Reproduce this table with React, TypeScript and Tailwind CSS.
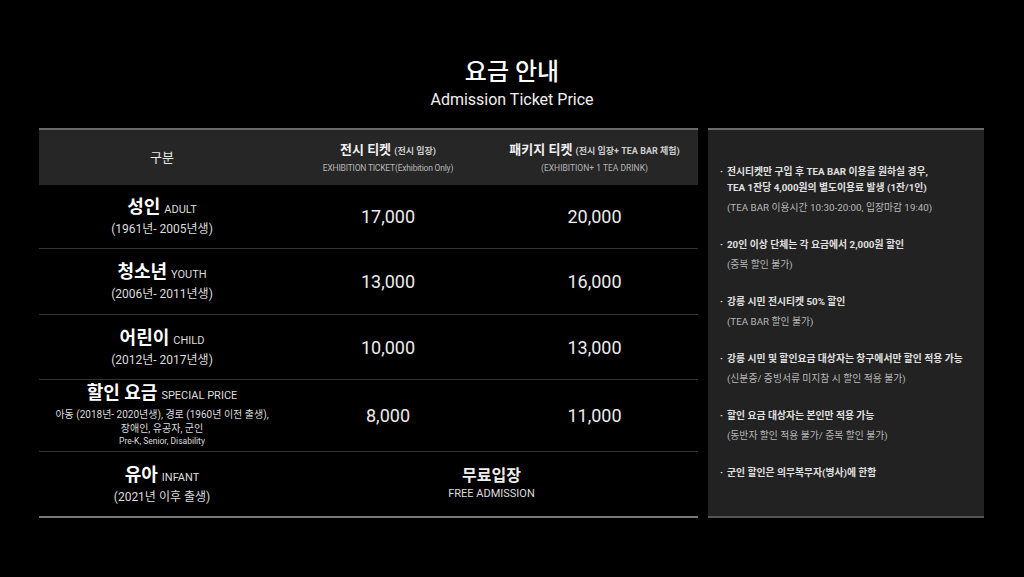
const rows = [
  { ko: "성인", en: "ADULT", sub: ["(1961년- 2005년생)"], a: "17,000", b: "20,000", h: "h-[64px]" },
  { ko: "청소년", en: "YOUTH", sub: ["(2006년- 2011년생)"], a: "13,000", b: "16,000", h: "h-[66px]" },
  { ko: "어린이", en: "CHILD", sub: ["(2012년- 2017년생)"], a: "10,000", b: "13,000", h: "h-[65px]" },
];

const notes = [
  {
    main: ["전시티켓만 구입 후 TEA BAR 이용을 원하실 경우,", "TEA 1잔당 4,000원의 별도이용료 발생 (1잔/1인)"],
    sub: "(TEA BAR 이용시간 10:30-20:00, 입장마감 19:40)",
  },
  { main: ["20인 이상 단체는 각 요금에서 2,000원 할인"], sub: "(중복 할인 불가)" },
  { main: ["강릉 시민 전시티켓 50% 할인"], sub: "(TEA BAR 할인 불가)" },
  { main: ["강릉 시민 및 할인요금 대상자는 창구에서만 할인 적용 가능"], sub: "(신분증/ 증빙서류 미지참 시 할인 적용 불가)" },
  { main: ["할인 요금 대상자는 본인만 적용 가능"], sub: "(동반자 할인 적용 불가/ 중복 할인 불가)" },
  { main: ["군인 할인은 의무복무자(병사)에 한함"] },
];

function Price({ v }: { v: string }) {
  return <div className="flex items-center justify-center text-[18px] text-[#ececec]">{v}</div>;
}

export default function App() {
  return (
    <div className="w-[1024px] h-[577px] bg-black text-white font-[Roboto,'Noto_Sans_CJK_KR',sans-serif] overflow-hidden">
      {/* 타이틀 */}
      <div className="flex flex-col items-center pt-[56px]">
        <h1 className="text-[24px] leading-[32px] font-medium">요금 안내</h1>
        <p className="text-[16px] leading-[20px] mt-[2px] text-[#f0f0f0]">Admission Ticket Price</p>
      </div>

      <div className="flex gap-[10px] pl-[39px] mt-[18px]">
        {/* 요금표 */}
        <div className="w-[659px] border-b-2 border-[#777]">
          <div className="grid grid-cols-[246px_206px_1fr] h-[57px] bg-[#262626] border-t-2 border-[#6a6a6a]">
            <div className="flex items-center justify-center text-[13px] text-[#e8e8e8]">구분</div>
            <div className="flex flex-col items-center justify-center">
              <div className="text-[13px] font-bold text-[#f0f0f0]">
                전시 티켓 <span className="text-[9px] font-bold text-[#ccc]">(전시 입장)</span>
              </div>
              <div className="text-[8.5px] text-[#b5b5b5] mt-[3px] tracking-[-0.2px]">EXHIBITION TICKET(Exhibition Only)</div>
            </div>
            <div className="flex flex-col items-center justify-center">
              <div className="text-[13px] font-bold text-[#f0f0f0]">
                패키지 티켓 <span className="text-[9px] font-bold text-[#ccc]">(전시 입장+ TEA BAR 체험)</span>
              </div>
              <div className="text-[8.5px] text-[#b5b5b5] mt-[3px]">(EXHIBITION+ 1 TEA DRINK)</div>
            </div>
          </div>

          {rows.map((r) => (
            <div key={r.ko} className={`grid grid-cols-[246px_206px_1fr] border-b border-[#333] ${r.h}`}>
              <div className="flex flex-col items-center justify-center">
                <div className="leading-[22px]">
                  <span className="text-[18px] font-bold">{r.ko}</span>{" "}
                  <span className="text-[11px] text-[#ddd]">{r.en}</span>
                </div>
                <div className="text-[12px] leading-[16px] text-[#ddd]">{r.sub[0]}</div>
              </div>
              <Price v={r.a} />
              <Price v={r.b} />
            </div>
          ))}

          <div className="grid grid-cols-[246px_206px_1fr] h-[72px] border-b border-[#333]">
            <div className="flex flex-col items-center justify-center">
              <div className="leading-[20px]">
                <span className="text-[18px] font-bold">할인 요금</span>{" "}
                <span className="text-[11px] text-[#ddd]">SPECIAL PRICE</span>
              </div>
              <div className="text-[10px] leading-[14px] text-[#ddd] mt-[2px]">아동 (2018년- 2020년생), 경로 (1960년 이전 출생),</div>
              <div className="text-[10px] leading-[13px] text-[#ddd]">장애인, 유공자, 군인</div>
              <div className="text-[8.5px] leading-[13px] text-[#ddd]">Pre-K, Senior, Disability</div>
            </div>
            <Price v="8,000" />
            <Price v="11,000" />
          </div>

          <div className="grid grid-cols-[246px_1fr] h-[64px]">
            <div className="flex flex-col items-center justify-center">
              <div className="leading-[22px]">
                <span className="text-[18px] font-bold">유아</span>{" "}
                <span className="text-[11px] text-[#ddd]">INFANT</span>
              </div>
              <div className="text-[12px] leading-[16px] text-[#ddd]">(2021년 이후 출생)</div>
            </div>
            <div className="flex flex-col items-center justify-center">
              <div className="text-[16px] font-bold leading-[20px] text-[#eee]">무료입장</div>
              <div className="text-[11px] leading-[16px] text-[#ddd]">FREE ADMISSION</div>
            </div>
          </div>
        </div>

        {/* 안내 사항 */}
        <div className="w-[276px] h-[390px] bg-[#222] border-t-2 border-b-2 border-t-[#6a6a6a] border-b-[#555] pt-[34px] pl-[12px]">
          {notes.map((n, i) => (
            <div key={i} className={i > 0 ? "mt-[21px]" : ""}>
              {n.main.map((m, j) => (
                <div key={j} className="flex text-[9.8px] leading-[16px] font-bold text-[#e0e0e0]">
                  <span className="w-[7px] shrink-0">{j === 0 ? "·" : ""}</span>
                  <span className="whitespace-nowrap">{m}</span>
                </div>
              ))}
              {n.sub && (
                <div className="text-[9.8px] leading-[16px] mt-[4px] pl-[7px] text-[#b8b8b8] whitespace-nowrap">{n.sub}</div>
              )}
            </div>
          ))}
        </div>
      </div>
    </div>
  );
}
